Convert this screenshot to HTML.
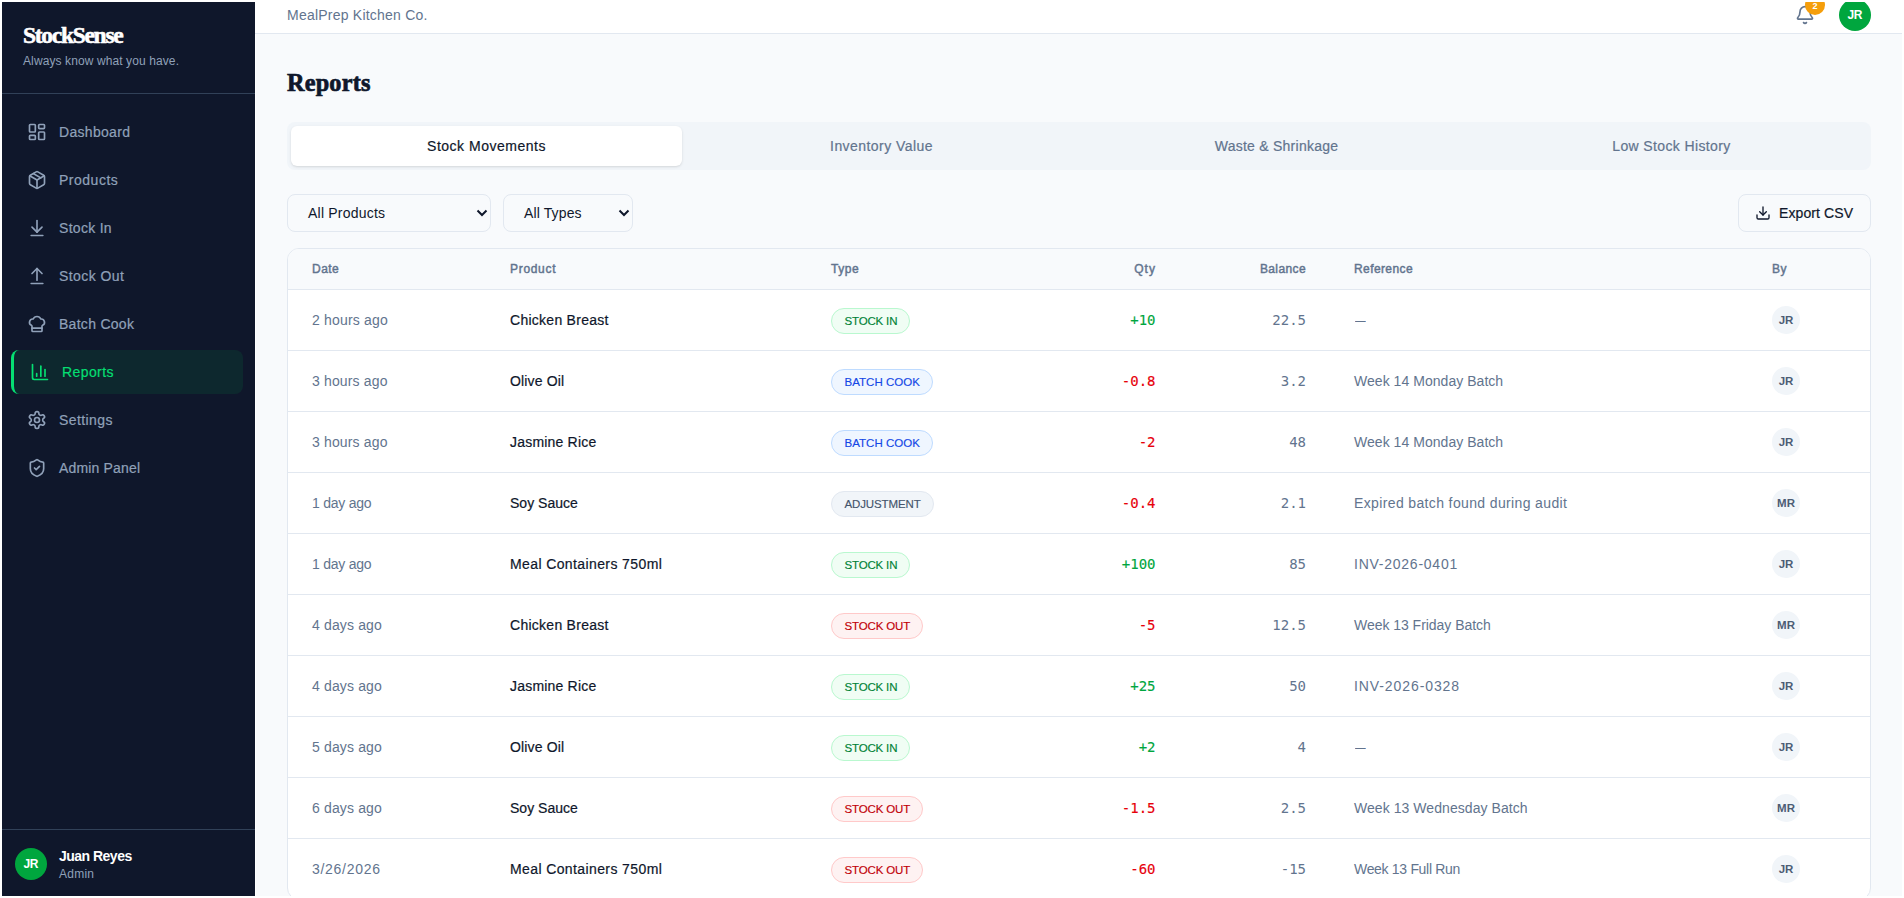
<!DOCTYPE html>
<html lang="en"><head><meta charset="utf-8"><title>StockSense - Reports</title>
<style>
*{box-sizing:border-box;margin:0;padding:0}
html,body{width:1904px;height:898px;overflow:hidden;background:#fff}
body{font-family:"Liberation Sans",sans-serif;color:#0f172b}
#frame{position:absolute;left:2px;top:2px;width:1900px;height:894px;overflow:hidden;background:#f8fafc}
#pg{position:absolute;left:-2px;top:-2px;width:1904px;height:898px}
.abs{position:absolute}
.t{position:absolute;white-space:nowrap;line-height:20px}
.serif{font-family:"Liberation Serif",serif;font-weight:700}
.mono{font-family:"DejaVu Sans Mono","Liberation Mono",monospace}
.med{-webkit-text-stroke:0.2px currentColor}
#side{position:absolute;left:-1px;top:2px;width:256px;height:894px;background:#0f172b}
#gap{position:absolute;left:255px;top:34px;width:1px;height:862px;background:#fff}
#top{position:absolute;left:255px;top:-22px;width:1649px;height:56px;background:#fff;border-bottom:1px solid #e2e8f0}
.nav{position:absolute;left:12px;width:232px;height:44px;border-radius:8px;color:#90a1b9;font-size:14px}
.nav svg{position:absolute;left:16px;top:12px;width:20px;height:20px;fill:none;stroke:currentColor;stroke-width:2;stroke-linecap:round;stroke-linejoin:round}
.nav span{position:absolute;left:48px;top:12px;line-height:20px;white-space:nowrap;-webkit-text-stroke:0.2px currentColor}
.nav.on{background:rgba(0,201,80,.1);color:#05df72;border-left:3px solid #05df72}
.av{position:absolute;border-radius:50%;display:flex;align-items:center;justify-content:center;font-weight:700}
#tabs{position:absolute;left:287px;top:122px;width:1584px;height:48px;background:#f1f5f9;border-radius:8px}
.tab{position:absolute;top:4px;width:391px;height:40px;border-radius:6px;font-size:14px;color:#62748e;text-align:center;line-height:40px;-webkit-text-stroke:0.2px currentColor;white-space:nowrap}
.tab.on{background:#fff;color:#0f172b;box-shadow:0 1px 3px 0 rgba(0,0,0,.1),0 1px 2px -1px rgba(0,0,0,.1)}
.sel{position:absolute;top:194px;height:38px;border:1px solid #e2e8f0;border-radius:8px;font-size:14px;color:#0f172b;background:#f8fafc}
.sel span{position:absolute;left:20px;top:8px;line-height:20px;white-space:nowrap}
.sel svg{position:absolute;right:2px;top:13px;width:12px;height:10px;fill:none;stroke:#0f172b;stroke-width:2;stroke-linecap:butt;stroke-linejoin:miter}
#card{position:absolute;left:287px;top:248px;width:1584px;height:652px;border:1px solid #e2e8f0;border-radius:12px;background:#fff;overflow:hidden}
#thead{position:absolute;left:0;top:0;width:1582px;height:41px;background:#f8fafc;border-bottom:1px solid #e2e8f0;font-size:12px;font-weight:400;-webkit-text-stroke:0.45px #62748e;color:#62748e}
.row{position:absolute;left:0;width:1582px;height:61px;border-bottom:1px solid #e2e8f0;font-size:14px}
.c{position:absolute;white-space:nowrap;line-height:20px;top:20px}
#thead .c{top:10px}
.chip{position:absolute;left:543px;top:18px;height:26px;border-radius:13px;border:1px solid;font-size:11.5px;line-height:24px;padding:0 0 0 12.5px;white-space:nowrap;-webkit-text-stroke:0.15px currentColor}
.cin{background:#f0fdf4;border-color:#b9f8cf;color:#008236}
.cbatch{background:#eff6ff;border-color:#bedbff;color:#1447e6}
.cadj{background:#f1f5f9;border-color:#e2e8f0;color:#45556c}
.cout{background:#fef2f2;border-color:#ffc9c9;color:#c10007}
.by{position:absolute;left:1484px;top:16px;width:28px;height:28px;border-radius:50%;background:#f1f5f9;color:#4d5d75;font-size:11.5px;font-weight:700;text-align:center;line-height:28px;white-space:nowrap}
</style></head>
<body>
<div id="frame"><div id="pg">
<header id="top"></header><div id="gap"></div>
<div class="t" style="left:287px;top:5px;font-size:14px;color:#62748e;letter-spacing:0.226px;">MealPrep Kitchen Co.</div>
<svg class="abs" style="left:1795px;top:5px;width:20px;height:20px;fill:none;stroke:#62748e;stroke-width:2;stroke-linecap:round;stroke-linejoin:round" viewBox="0 0 24 24"><path d="M10.268 21a2 2 0 0 0 3.464 0"/><path d="M3.262 15.326A1 1 0 0 0 4 17h16a1 1 0 0 0 .74-1.673C19.41 13.956 18 12.499 18 8A6 6 0 0 0 6 8c0 4.499-1.411 5.956-2.738 7.326"/></svg>
<div class="av" style="left:1805px;top:-5px;width:20px;height:20px;background:#f59e0b;color:#fff;font-size:9px;padding-top:1.5px">2</div>
<div class="av" style="left:1839px;top:-1px;width:32px;height:32px;background:#00a63e;color:#fff;font-size:12px;letter-spacing:-0.4px;text-indent:-0.4px">JR</div>
<aside id="side">
<div class="t serif" style="left:24px;top:19px;font-size:23.5px;line-height:28px;color:#fff;-webkit-text-stroke:0.6px #fff;letter-spacing:-1.29px;">StockSense</div>
<div class="t" style="left:24px;top:51px;font-size:12px;line-height:16px;color:#90a1b9;letter-spacing:0.103px;">Always know what you have.</div>
<div class="abs" style="left:0;top:91px;width:256px;height:1px;background:#314158"></div>
<div class="nav" style="top:108px"><svg viewBox="0 0 24 24"><rect width="7" height="9" x="3" y="3" rx="1"/><rect width="7" height="5" x="14" y="3" rx="1"/><rect width="7" height="9" x="14" y="12" rx="1"/><rect width="7" height="5" x="3" y="16" rx="1"/></svg><span style="letter-spacing:0.311px;">Dashboard</span></div>
<div class="nav" style="top:156px"><svg viewBox="0 0 24 24"><path d="m7.5 4.27 9 5.15"/><path d="M21 8a2 2 0 0 0-1-1.73l-7-4a2 2 0 0 0-2 0l-7 4A2 2 0 0 0 3 8v8a2 2 0 0 0 1 1.73l7 4a2 2 0 0 0 2 0l7-4A2 2 0 0 0 21 16Z"/><path d="m3.3 7 8.7 5 8.7-5"/><path d="M12 22V12"/></svg><span style="letter-spacing:0.506px;">Products</span></div>
<div class="nav" style="top:204px"><svg viewBox="0 0 24 24"><path d="M12 17V3"/><path d="m6 11 6 6 6-6"/><path d="M19 21H5"/></svg><span style="letter-spacing:0.288px;">Stock In</span></div>
<div class="nav" style="top:252px"><svg viewBox="0 0 24 24"><path d="m18 9-6-6-6 6"/><path d="M12 3v14"/><path d="M5 21h14"/></svg><span style="letter-spacing:0.415px;">Stock Out</span></div>
<div class="nav" style="top:300px"><svg viewBox="0 0 24 24"><path d="M17 21a1 1 0 0 0 1-1v-5.35c0-.457.316-.844.727-1.041a4 4 0 0 0-2.134-7.589 5 5 0 0 0-9.186 0 4 4 0 0 0-2.134 7.588c.411.198.727.585.727 1.041V20a1 1 0 0 0 1 1Z"/><path d="M6 17h12"/></svg><span style="letter-spacing:0.283px;">Batch Cook</span></div>
<div class="nav on" style="top:348px"><svg viewBox="0 0 24 24"><path d="M3 3v16a2 2 0 0 0 2 2h16"/><path d="M18 17V9"/><path d="M13 17V5"/><path d="M8 17v-3"/></svg><span style="letter-spacing:0.41px;">Reports</span></div>
<div class="nav" style="top:396px"><svg viewBox="0 0 24 24"><path d="M12.22 2h-.44a2 2 0 0 0-2 2v.18a2 2 0 0 1-1 1.73l-.43.25a2 2 0 0 1-2 0l-.15-.08a2 2 0 0 0-2.73.73l-.22.38a2 2 0 0 0 .73 2.73l.15.1a2 2 0 0 1 1 1.72v.51a2 2 0 0 1-1 1.74l-.15.09a2 2 0 0 0-.73 2.73l.22.38a2 2 0 0 0 2.73.73l.15-.08a2 2 0 0 1 2 0l.43.25a2 2 0 0 1 1 1.73V20a2 2 0 0 0 2 2h.44a2 2 0 0 0 2-2v-.18a2 2 0 0 1 1-1.73l.43-.25a2 2 0 0 1 2 0l.15.08a2 2 0 0 0 2.73-.73l.22-.39a2 2 0 0 0-.73-2.73l-.15-.08a2 2 0 0 1-1-1.74v-.5a2 2 0 0 1 1-1.74l.15-.09a2 2 0 0 0 .73-2.73l-.22-.38a2 2 0 0 0-2.73-.73l-.15.08a2 2 0 0 1-2 0l-.43-.25a2 2 0 0 1-1-1.73V4a2 2 0 0 0-2-2z"/><circle cx="12" cy="12" r="3"/></svg><span style="letter-spacing:0.401px;">Settings</span></div>
<div class="nav" style="top:444px"><svg viewBox="0 0 24 24"><path d="M20 13c0 5-3.5 7.5-7.66 8.950a1 1 0 0 1-.67-.01C7.5 20.5 4 18 4 13V6a1 1 0 0 1 1-1c2 0 4.5-1.2 6.240-2.720a1.170 1.170 0 0 1 1.520 0C14.510 3.810 17 5 19 5a1 1 0 0 1 1 1z"/><path d="m9 12 2 2 4-4"/></svg><span style="letter-spacing:0.164px;">Admin Panel</span></div>
<div class="abs" style="left:0;top:827px;width:256px;height:1px;background:#314158"></div>
<div class="av" style="left:16px;top:846px;width:32px;height:32px;background:#00a63e;color:#fff;font-size:12px;letter-spacing:-0.4px;text-indent:-0.4px">JR</div>
<div class="t" style="left:60px;top:844px;font-size:14px;font-weight:700;color:#fff;letter-spacing:-0.513px;">Juan Reyes</div>
<div class="t" style="left:60px;top:864px;font-size:12px;line-height:16px;color:#90a1b9;letter-spacing:0.257px;">Admin</div>
</aside>
<h1 class="t serif" style="left:287px;top:67px;font-size:24.25px;line-height:32px;color:#0f172b;-webkit-text-stroke:0.7px #0f172b;letter-spacing:0.204px;">Reports</h1>
<div id="tabs"><div class="tab on" style="left:4px;letter-spacing:0.502px;">Stock Movements</div><div class="tab" style="left:399px;letter-spacing:0.443px;">Inventory Value</div><div class="tab" style="left:794px;letter-spacing:0.251px;">Waste &amp; Shrinkage</div><div class="tab" style="left:1189px;letter-spacing:0.374px;">Low Stock History</div></div>
<div class="sel" style="left:287px;width:204px"><span style="letter-spacing:0.216px;">All Products</span><svg viewBox="0 0 12 10"><path d="M1.5 2.5 6 7l4.5-4.5"/></svg></div>
<div class="sel" style="left:503px;width:130px"><span style="letter-spacing:0.128px;">All Types</span><svg viewBox="0 0 12 10"><path d="M1.5 2.5 6 7l4.5-4.5"/></svg></div>
<div class="sel" style="left:1738px;width:133px"><svg viewBox="0 0 24 24" style="left:16px;top:10px;width:16px;height:16px;stroke-width:2;stroke-linecap:round;stroke-linejoin:round;stroke:#0f172b"><path d="M21 15v4a2 2 0 0 1-2 2H5a2 2 0 0 1-2-2v-4"/><path d="m7 10 5 5 5-5"/><path d="M12 15V3"/></svg><span class="med" style="left:40px;letter-spacing:0.106px;">Export CSV</span></div>
<div id="card">
<div id="thead"><div class="c" style="left:24px;letter-spacing:0.46px;">Date</div><div class="c" style="left:222px;letter-spacing:0.692px;">Product</div><div class="c" style="left:543px;letter-spacing:0.521px;">Type</div><div class="c" style="right:714px;letter-spacing:1.043px;">Qty</div><div class="c" style="right:564px;letter-spacing:0.389px;">Balance</div><div class="c" style="left:1066px;letter-spacing:0.403px;">Reference</div><div class="c" style="left:1484px;letter-spacing:0.492px;">By</div></div>
<div class="row" style="top:41px"><div class="c" style="left:24px;color:#62748e;letter-spacing:0.186px;">2 hours ago</div><div class="c med" style="left:222px;color:#0f172b;letter-spacing:0.269px;">Chicken Breast</div><div class="chip cin" style="width:79px;letter-spacing:-0.164px;">STOCK IN</div><div class="c mono" style="right:714.5px;-webkit-text-stroke:0.15px #00a63e;color:#00a63e">+10</div><div class="c mono" style="right:564px;color:#62748e">22.5</div><div class="c" style="left:1067px;color:#62748e;transform:scaleX(.76);transform-origin:0 50%">—</div><div class="by" style="letter-spacing:-0.102px;text-indent:-0.102px;">JR</div></div>
<div class="row" style="top:102px"><div class="c" style="left:24px;color:#62748e;letter-spacing:0.15px;">3 hours ago</div><div class="c med" style="left:222px;color:#0f172b;letter-spacing:0.144px;">Olive Oil</div><div class="chip cbatch" style="width:102px;letter-spacing:0.021px;">BATCH COOK</div><div class="c mono" style="right:714.5px;-webkit-text-stroke:0.15px #e7000b;color:#e7000b">-0.8</div><div class="c mono" style="right:564px;color:#62748e">3.2</div><div class="c" style="left:1066px;color:#62748e;letter-spacing:0.04px;">Week 14 Monday Batch</div><div class="by" style="letter-spacing:-0.102px;text-indent:-0.102px;">JR</div></div>
<div class="row" style="top:163px"><div class="c" style="left:24px;color:#62748e;letter-spacing:0.15px;">3 hours ago</div><div class="c med" style="left:222px;color:#0f172b;letter-spacing:0.197px;">Jasmine Rice</div><div class="chip cbatch" style="width:102px;letter-spacing:0.021px;">BATCH COOK</div><div class="c mono" style="right:714.5px;-webkit-text-stroke:0.15px #e7000b;color:#e7000b">-2</div><div class="c mono" style="right:564px;color:#62748e">48</div><div class="c" style="left:1066px;color:#62748e;letter-spacing:0.04px;">Week 14 Monday Batch</div><div class="by" style="letter-spacing:-0.102px;text-indent:-0.102px;">JR</div></div>
<div class="row" style="top:224px"><div class="c" style="left:24px;color:#62748e;letter-spacing:-0.244px;">1 day ago</div><div class="c med" style="left:222px;color:#0f172b;letter-spacing:0.009px;">Soy Sauce</div><div class="chip cadj" style="width:103px;letter-spacing:-0.121px;">ADJUSTMENT</div><div class="c mono" style="right:714.5px;-webkit-text-stroke:0.15px #e7000b;color:#e7000b">-0.4</div><div class="c mono" style="right:564px;color:#62748e">2.1</div><div class="c" style="left:1066px;color:#62748e;letter-spacing:0.366px;">Expired batch found during audit</div><div class="by" style="letter-spacing:0.305px;text-indent:0.305px;">MR</div></div>
<div class="row" style="top:285px"><div class="c" style="left:24px;color:#62748e;letter-spacing:-0.244px;">1 day ago</div><div class="c med" style="left:222px;color:#0f172b;letter-spacing:0.392px;">Meal Containers 750ml</div><div class="chip cin" style="width:79px;letter-spacing:-0.164px;">STOCK IN</div><div class="c mono" style="right:714.5px;-webkit-text-stroke:0.15px #00a63e;color:#00a63e">+100</div><div class="c mono" style="right:564px;color:#62748e">85</div><div class="c" style="left:1066px;color:#62748e;letter-spacing:0.755px;">INV-2026-0401</div><div class="by" style="letter-spacing:-0.102px;text-indent:-0.102px;">JR</div></div>
<div class="row" style="top:346px"><div class="c" style="left:24px;color:#62748e;letter-spacing:0.15px;">4 days ago</div><div class="c med" style="left:222px;color:#0f172b;letter-spacing:0.269px;">Chicken Breast</div><div class="chip cout" style="width:92px;letter-spacing:-0.143px;">STOCK OUT</div><div class="c mono" style="right:714.5px;-webkit-text-stroke:0.15px #e7000b;color:#e7000b">-5</div><div class="c mono" style="right:564px;color:#62748e">12.5</div><div class="c" style="left:1066px;color:#62748e;letter-spacing:-0.034px;">Week 13 Friday Batch</div><div class="by" style="letter-spacing:0.305px;text-indent:0.305px;">MR</div></div>
<div class="row" style="top:407px"><div class="c" style="left:24px;color:#62748e;letter-spacing:0.15px;">4 days ago</div><div class="c med" style="left:222px;color:#0f172b;letter-spacing:0.197px;">Jasmine Rice</div><div class="chip cin" style="width:79px;letter-spacing:-0.164px;">STOCK IN</div><div class="c mono" style="right:714.5px;-webkit-text-stroke:0.15px #00a63e;color:#00a63e">+25</div><div class="c mono" style="right:564px;color:#62748e">50</div><div class="c" style="left:1066px;color:#62748e;letter-spacing:0.909px;">INV-2026-0328</div><div class="by" style="letter-spacing:-0.102px;text-indent:-0.102px;">JR</div></div>
<div class="row" style="top:468px"><div class="c" style="left:24px;color:#62748e;letter-spacing:0.15px;">5 days ago</div><div class="c med" style="left:222px;color:#0f172b;letter-spacing:0.144px;">Olive Oil</div><div class="chip cin" style="width:79px;letter-spacing:-0.164px;">STOCK IN</div><div class="c mono" style="right:714.5px;-webkit-text-stroke:0.15px #00a63e;color:#00a63e">+2</div><div class="c mono" style="right:564px;color:#62748e">4</div><div class="c" style="left:1067px;color:#62748e;transform:scaleX(.76);transform-origin:0 50%">—</div><div class="by" style="letter-spacing:-0.102px;text-indent:-0.102px;">JR</div></div>
<div class="row" style="top:529px"><div class="c" style="left:24px;color:#62748e;letter-spacing:0.15px;">6 days ago</div><div class="c med" style="left:222px;color:#0f172b;letter-spacing:0.009px;">Soy Sauce</div><div class="chip cout" style="width:92px;letter-spacing:-0.143px;">STOCK OUT</div><div class="c mono" style="right:714.5px;-webkit-text-stroke:0.15px #e7000b;color:#e7000b">-1.5</div><div class="c mono" style="right:564px;color:#62748e">2.5</div><div class="c" style="left:1066px;color:#62748e;letter-spacing:0.058px;">Week 13 Wednesday Batch</div><div class="by" style="letter-spacing:0.305px;text-indent:0.305px;">MR</div></div>
<div class="row" style="top:590px"><div class="c" style="left:24px;color:#62748e;letter-spacing:0.711px;">3/26/2026</div><div class="c med" style="left:222px;color:#0f172b;letter-spacing:0.392px;">Meal Containers 750ml</div><div class="chip cout" style="width:92px;letter-spacing:-0.143px;">STOCK OUT</div><div class="c mono" style="right:714.5px;-webkit-text-stroke:0.15px #e7000b;color:#e7000b">-60</div><div class="c mono" style="right:564px;color:#62748e">-15</div><div class="c" style="left:1066px;color:#62748e;letter-spacing:-0.313px;">Week 13 Full Run</div><div class="by" style="letter-spacing:-0.102px;text-indent:-0.102px;">JR</div></div>
</div>
</div></div>
</body></html>
